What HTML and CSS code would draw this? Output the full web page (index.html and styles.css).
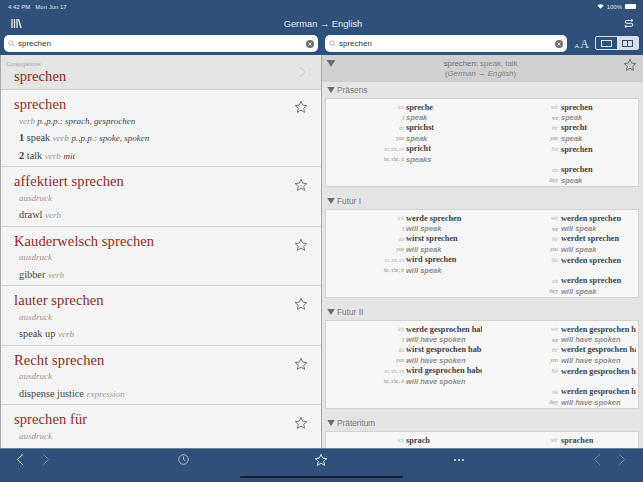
FILE: index.html
```html
<!DOCTYPE html>
<html lang="de">
<head>
<meta charset="utf-8">
<title>German → English</title>
<link rel="stylesheet" href="styles.css">
</head>
<body>
<svg class="defs" width="0" height="0" aria-hidden="true">
  <symbol id="star" viewBox="0 0 24 24"><path d="M12 2.2l2.9 6.6 7.1.7-5.4 4.7 1.6 7-6.200-3.700-6.200 3.700 1.600-7L2 9.500l7.100-.7z" fill="none" stroke="currentColor" stroke-width="1.700" stroke-linejoin="round"/></symbol>
  <symbol id="glass" viewBox="0 0 12 12"><circle cx="5" cy="5" r="3.600" fill="none" stroke="#8e8e93" stroke-width="1.100"/><path d="M7.700 7.700l3 3" stroke="#8e8e93" stroke-width="1.200"/></symbol>
  <symbol id="clear" viewBox="0 0 10 10"><circle cx="5" cy="5" r="4" fill="#6e6e6e"/><path d="M3.400 3.400l3.200 3.200M6.600 3.400l-3.200 3.200" stroke="#e8e8e8" stroke-width="1"/></symbol>
  <symbol id="tri" viewBox="0 0 10 8"><path d="M0 0h10L5 8z" fill="currentColor"/></symbol>
</svg>
<div class="app">
  <header class="top">
    <div class="status"><span>4:42 PM&nbsp;&nbsp; Mon Jun 17</span>
      <span class="status-right">
        <svg width="7" height="5" viewBox="0 0 10 8"><path d="M5 7.500L0 2.500C3 -.5 7 -.5 10 2.500z" fill="#fff"/></svg>
        100%
        <span class="battery"></span>
      </span>
    </div>
    <div class="titlebar">
      <svg class="lib" width="11" height="11" viewBox="0 0 11 11"><path d="M1 1v9M3.500 1v9M6 1v9M7.500 1l2.500 9" stroke="#fff" stroke-width="1.200" fill="none"/></svg>
      <div class="title">German <span class="arrow">→</span> English</div>
      <svg class="swap" width="10" height="9" viewBox="0 0 13 11"><path d="M11 1.500H3.500a1.900 1.900 0 0 0 0 3.800h6a1.900 1.900 0 0 1 0 3.900H1.500M9.500 0l2 1.500-2 1.500M3 7.700L1 9.200l2 1.500" stroke="#fff" stroke-width="1.200" fill="none"/></svg>
    </div>
    <div class="searches">
      <div class="search search-l"><svg class="ic12" width="7" height="7"><use href="#glass"/></svg><span class="q">sprechen</span><svg class="ic-clear" width="10" height="10"><use href="#clear"/></svg></div>
      <div class="search search-r"><svg class="ic12" width="7" height="7"><use href="#glass"/></svg><span class="q">sprechen</span><svg class="ic-clear" width="10" height="10"><use href="#clear"/></svg></div>
      <div class="fontsize"><span class="a-s">A</span><span class="a-l">A</span></div>
      <div class="seg">
        <span class="seg-item"><span class="pane-one"></span></span>
        <span class="seg-item seg-on"><span class="pane-two"></span></span>
      </div>
    </div>
  </header>

  <main class="panes">
    <section class="list">
      <div class="conj">
        <div class="conj-label">Conjugations</div>
        <div class="hw">sprechen</div>
        <svg class="chev" width="7" height="12" viewBox="0 0 7 12"><path d="M1 1l5 5-5 5" fill="none" stroke="#c8c8c8" stroke-width="1"/></svg>
      </div>
      <article class="entry e77">
        <div class="hw">sprechen</div>
        <div class="gram"><i class="pos">verb</i> <i class="dk">p.,p.p.: sprach, gesprochen</i></div>
        <div class="tr"><b>1</b> speak <i class="pos">verb</i> <i class="dk">p.,p.p.: spoke, spoken</i></div>
        <div class="tr"><b>2</b> talk <i class="pos">verb</i> <i class="dk">mit</i></div>
        <svg class="fav" width="14" height="14"><use href="#star"/></svg>
      </article>
      <article class="entry">
        <div class="hw">affektiert sprechen</div>
        <div class="gram"><i class="pos">ausdruck</i></div>
        <div class="tr">drawl <i class="pos">verb</i></div>
        <svg class="fav" width="14" height="14"><use href="#star"/></svg>
      </article>
      <article class="entry">
        <div class="hw">Kauderwelsch sprechen</div>
        <div class="gram"><i class="pos">ausdruck</i></div>
        <div class="tr">gibber <i class="pos">verb</i></div>
        <svg class="fav" width="14" height="14"><use href="#star"/></svg>
      </article>
      <article class="entry">
        <div class="hw">lauter sprechen</div>
        <div class="gram"><i class="pos">ausdruck</i></div>
        <div class="tr">speak up <i class="pos">verb</i></div>
        <svg class="fav" width="14" height="14"><use href="#star"/></svg>
      </article>
      <article class="entry">
        <div class="hw">Recht sprechen</div>
        <div class="gram"><i class="pos">ausdruck</i></div>
        <div class="tr">dispense justice <i class="pos">expression</i></div>
        <svg class="fav" width="14" height="14"><use href="#star"/></svg>
      </article>
      <article class="entry">
        <div class="hw">sprechen für</div>
        <div class="gram"><i class="pos">ausdruck</i></div>
        <svg class="fav" width="14" height="14"><use href="#star"/></svg>
      </article>
    </section>

    <section class="detail">
      <div class="dhead">
        <svg class="dtri" width="10" height="7"><use href="#tri"/></svg>
        <div class="dtext"><div><b>sprechen:</b> speak, talk</div><div>(<i>German</i> → <i>English</i>)</div></div>
        <svg class="dstar" width="14" height="14"><use href="#star"/></svg>
      </div>

      <div class="sec">
        <h2 class="sec-h"><svg width="8" height="6"><use href="#tri"/></svg>Präsens</h2>
        <div class="tbl">
          <div class="col">
            <div class="row"><span class="pr">ich</span><b>spreche</b></div>
            <div class="row"><span class="pr en">I</span><i>speak</i></div>
            <div class="row"><span class="pr">du</span><b>sprichst</b></div>
            <div class="row"><span class="pr en">you</span><i>speak</i></div>
            <div class="row"><span class="pr">er, sie, es</span><b>spricht</b></div>
            <div class="row"><span class="pr en">he, she, it</span><i>speaks</i></div>
          </div>
          <div class="col">
            <div class="row"><span class="pr">wir</span><b>sprechen</b></div>
            <div class="row"><span class="pr en">we</span><i>speak</i></div>
            <div class="row"><span class="pr">ihr</span><b>sprecht</b></div>
            <div class="row"><span class="pr en">you</span><i>speak</i></div>
            <div class="row row-sie"><span class="pr">Sie</span><b>sprechen</b></div>
            <div class="row"><span class="pr">sie</span><b>sprechen</b></div>
            <div class="row"><span class="pr en">they</span><i>speak</i></div>
          </div>
        </div>
      </div>

      <div class="sec">
        <h2 class="sec-h"><svg width="8" height="6"><use href="#tri"/></svg>Futur I</h2>
        <div class="tbl">
          <div class="col">
            <div class="row"><span class="pr">ich</span><b>werde sprechen</b></div>
            <div class="row"><span class="pr en">I</span><i>will speak</i></div>
            <div class="row"><span class="pr">du</span><b>wirst sprechen</b></div>
            <div class="row"><span class="pr en">you</span><i>will speak</i></div>
            <div class="row"><span class="pr">er, sie, es</span><b>wird sprechen</b></div>
            <div class="row"><span class="pr en">he, she, it</span><i>will speak</i></div>
          </div>
          <div class="col">
            <div class="row"><span class="pr">wir</span><b>werden sprechen</b></div>
            <div class="row"><span class="pr en">we</span><i>will speak</i></div>
            <div class="row"><span class="pr">ihr</span><b>werdet sprechen</b></div>
            <div class="row"><span class="pr en">you</span><i>will speak</i></div>
            <div class="row row-sie"><span class="pr">Sie</span><b>werden sprechen</b></div>
            <div class="row"><span class="pr">sie</span><b>werden sprechen</b></div>
            <div class="row"><span class="pr en">they</span><i>will speak</i></div>
          </div>
        </div>
      </div>

      <div class="sec">
        <h2 class="sec-h"><svg width="8" height="6"><use href="#tri"/></svg>Futur II</h2>
        <div class="tbl">
          <div class="col">
            <div class="row"><span class="pr">ich</span><b>werde gesprochen haben</b></div>
            <div class="row"><span class="pr en">I</span><i>will have spoken</i></div>
            <div class="row"><span class="pr">du</span><b>wirst gesprochen haben</b></div>
            <div class="row"><span class="pr en">you</span><i>will have spoken</i></div>
            <div class="row"><span class="pr">er, sie, es</span><b>wird gesprochen haben</b></div>
            <div class="row"><span class="pr en">he, she, it</span><i>will have spoken</i></div>
          </div>
          <div class="col">
            <div class="row"><span class="pr">wir</span><b>werden gesprochen haben</b></div>
            <div class="row"><span class="pr en">we</span><i>will have spoken</i></div>
            <div class="row"><span class="pr">ihr</span><b>werdet gesprochen haben</b></div>
            <div class="row"><span class="pr en">you</span><i>will have spoken</i></div>
            <div class="row row-sie"><span class="pr">Sie</span><b>werden gesprochen haben</b></div>
            <div class="row"><span class="pr">sie</span><b>werden gesprochen haben</b></div>
            <div class="row"><span class="pr en">they</span><i>will have spoken</i></div>
          </div>
        </div>
      </div>

      <div class="sec">
        <h2 class="sec-h"><svg width="8" height="6"><use href="#tri"/></svg>Präteritum</h2>
        <div class="tbl">
          <div class="col">
            <div class="row"><span class="pr">ich</span><b>sprach</b></div>
          </div>
          <div class="col">
            <div class="row"><span class="pr">wir</span><b>sprachen</b></div>
          </div>
        </div>
      </div>
    </section>
  </main>

  <footer class="bottom">
    <div class="bar">
      <svg class="chv" width="8" height="13" viewBox="0 0 8 13"><path d="M7 1L1.500 6.500 7 12" fill="none" stroke="#fff" stroke-width="1"/></svg>
      <svg class="chv dim nav2" width="8" height="13" viewBox="0 0 8 13"><path d="M1 1l5.500 5.500L1 12" fill="none" stroke="#fff" stroke-width="1"/></svg>
      <svg class="clock" width="11" height="11" viewBox="0 0 11 11"><circle cx="5.500" cy="5.500" r="4.800" fill="none" stroke="#aebccd" stroke-width="1"/><path d="M5.500 2.500v3.200l2 1" fill="none" stroke="#aebccd" stroke-width="1"/></svg>
      <svg class="bstar" width="14" height="14"><use href="#star"/></svg>
      <span class="dots"><i></i><i></i><i></i></span>
      <svg class="chv dim nav3" width="8" height="13" viewBox="0 0 8 13"><path d="M7 1L1.500 6.500 7 12" fill="none" stroke="#fff" stroke-width="1"/></svg>
      <svg class="chv dim nav4" width="8" height="13" viewBox="0 0 8 13"><path d="M1 1l5.500 5.500L1 12" fill="none" stroke="#fff" stroke-width="1"/></svg>
    </div>
    <div class="home"></div>
  </footer>
</div>
</body>
</html>
```

FILE: styles.css
```css
* { box-sizing: border-box; }
html, body { margin: 0; padding: 0; }
body { width: 643px; height: 482px; overflow: hidden; font-family: "Liberation Sans", Arial, sans-serif; background: #2f5179; }
.defs { display: block; height: 0; }
.app { width: 643px; height: 482px; display: flex; flex-direction: column; overflow: hidden; }

.top { height: 55px; background: #2f5179; color: #fff; flex: none; }
.status { height: 12px; padding: 1px 7px 0 8px; display: flex; justify-content: space-between; align-items: center; font-size: 6px; color: #dfe5ec; }
.status-right { display: flex; align-items: center; gap: 3px; }
.battery { width: 11px; height: 5px; background: #fff; border-radius: 1px; margin-right: 0; }
.titlebar { height: 23px; padding: 0 9px 0 11px; display: flex; align-items: center; justify-content: space-between; }
.title { font-size: 9.300px; color: #e6ebf1; }
.arrow { font-weight: bold; }
.searches { display: flex; align-items: flex-start; height: 20px; padding-left: 4px; }
.search { height: 17px; background: #fff; border-radius: 5px; display: flex; align-items: center; padding: 0 3px 0 4px; color: #333; font-size: 8px; }
.search-l { width: 314px; }
.search-r { width: 242px; margin-left: 7px; }
.q { margin-left: 3px; flex: 1; }
.ic-clear { flex: none; }
.fontsize { width: 17px; margin-left: 6px; margin-top: 3px; font-family: "Liberation Serif", serif; color: #dfe5ec; display: flex; align-items: baseline; justify-content: center; line-height: 12px; }
.a-s { font-size: 7px; }
.a-l { font-size: 12px; margin-left: 1px; }
.seg { margin-left: 5px; margin-top: 1px; width: 44px; height: 14px; border: 1px solid #d6dee7; border-radius: 2px; display: flex; }
.seg-item { flex: 1; display: flex; align-items: center; justify-content: center; }
.seg-on { background: #d8dfe7; }
.pane-one { width: 11px; height: 7px; border: 1px solid #e6ebf1; }
.pane-two { width: 11px; height: 7px; border: 1px solid #2f5179; background: linear-gradient(#2f5179, #2f5179) center / 1px 100% no-repeat; }

.panes { flex: 1; min-height: 0; display: flex; background: #e5e5e5; }
.list { width: 322px; flex: none; overflow: hidden; border-left: 1px solid #a8a8a8; border-right: 1px solid #a8a8a8; background: #f4f4f4; font-family: "Liberation Serif", serif; }
.conj { height: 35px; background: #e4e4e4; border-bottom: 1px solid #d2d2d2; position: relative; padding: 6px 0 0 5px; }
.conj-label { font: 6px/6px "Liberation Sans", sans-serif; color: #a8a8a8; }
.conj .hw { margin: 1px 0 0 8px; line-height: 17px; }
.chev { position: absolute; right: 15px; top: 11px; }
.hw { font-size: 14.500px; line-height: 18px; color: #8d2a22; letter-spacing: .1px; }
.entry { height: 59.500px; padding: 5px 0 0 13px; border-bottom: 1px solid #d2d2d2; position: relative; }
.e77 { height: 77px; }
.gram { font-size: 9px; line-height: 14px; margin: .500px 0 0 5px; color: #444; }
.tr { font-size: 10.300px; line-height: 14px; margin: 3.500px 0 0 5px; color: #444; }
.tr b { font-size: 10.500px; }
.tr i { font-size: 9px; }
.pos { color: #9a9a9a; }
.dk { color: #444; }
.fav { position: absolute; right: 13px; top: 11px; color: #777; }
.e77 .fav { top: 10px; }

.detail { flex: 1; min-width: 0; overflow: hidden; background: #e4e4e4; }
.dhead { height: 27px; background: #d0d0d0; position: relative; text-align: center; padding: 4px 4px 0 0; font-size: 7.800px; line-height: 10px; color: #7f7f7f; }
.dhead b { font-weight: normal; color: #6a6a6a; }
.dtri { position: absolute; left: 4px; top: 5px; color: #6a6a6a; }
.dstar { position: absolute; right: 6px; top: 3px; color: #6f6f6f; }
.sec { padding: 0 4px 0 3px; height: 111px; }
.sec-h { margin: 0; height: 16px; display: flex; align-items: center; gap: 2px; padding-left: 2px; font-size: 8.300px; font-weight: normal; color: #777; }
.sec-h svg { color: #6a6a6a; }
.tbl { height: 89px; background: #f6f6f6; border: 1px solid #d2d2d2; display: flex; overflow: hidden; padding-top: 3px; }
.col { flex: none; width: 156px; overflow: hidden; }
.col + .col { width: 154px; }
.row { display: grid; grid-template-columns: 78px 1fr; column-gap: 2px; align-items: center; height: 10.400px; white-space: nowrap; overflow: hidden; }
.col + .col .row { grid-template-columns: 76px 1fr; column-gap: 3px; }
.row-sie { height: 11px; margin-bottom: 10px; }
.pr { font: italic 5.300px "Liberation Serif", serif; color: #b0b0b0; text-align: right; }
.pr.en { color: #8a8a8a; }
.row b { font: bold 8.300px "Liberation Serif", serif; color: #444; overflow: hidden; }
.row i { font-size: 7.500px; font-weight: bold; font-style: italic; color: #8e8e8e; }

.bottom { height: 34px; flex: none; background: #2f5179; position: relative; border-top: 1px solid #6b7f96; }
.bar { height: 24px; display: flex; align-items: center; position: relative; }
.chv { position: absolute; top: 4px; left: 16px; }
.chv.dim { opacity: .3; }
.nav2 { left: 42px; }
.nav3 { left: 593px; }
.nav4 { left: 618px; }
.clock { position: absolute; left: 178px; top: 5px; }
.bstar { position: absolute; left: 314px; top: 4px; color: #e6ebf1; }
.dots { position: absolute; left: 454px; top: 10px; display: flex; gap: 2px; }
.dots i { width: 2px; height: 2px; border-radius: 50%; background: #e6ebf1; }
.home { position: absolute; left: 240px; top: 27px; width: 163px; height: 2px; border-radius: 1px; background: #15202c; }
```
